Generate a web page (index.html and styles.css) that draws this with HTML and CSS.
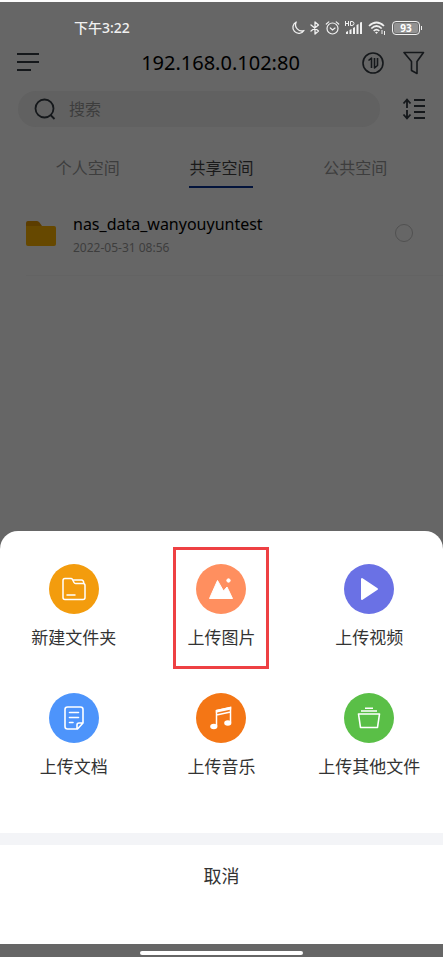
FILE: index.html
```html
<!DOCTYPE html>
<html lang="zh-CN">
<head>
<meta charset="utf-8">
<meta name="viewport" content="width=device-width, initial-scale=1">
<title>192.168.0.102:80</title>
<link rel="stylesheet" href="styles.css">
</head>
<body>
<div class="status">
  <span class="clock">下午3:22</span>
  <div class="status-icons">
    <svg width="14" height="14" viewBox="0 0 14 14" fill="none" stroke="currentColor" stroke-width="1.3" stroke-linejoin="round"><path d="M5.2 1A6 6 0 1 0 13 9.500A6.200 6.200 0 0 1 5.200 1z"/></svg>
    <svg width="10" height="14" viewBox="0 0 10 14" fill="none" stroke="currentColor" stroke-width="1.3" stroke-linejoin="round" stroke-linecap="round"><path d="M1 4l7.500 6L5 13V1l3.500 3L1 10"/></svg>
    <svg width="15" height="14" viewBox="0 0 14 14" fill="none" stroke="currentColor" stroke-width="1.200" stroke-linecap="round"><circle cx="7" cy="7.500" r="5.500"/><path d="M4.800 7L7 9l2.500-2M.8 3L3.300.9M13.200 3L10.700.9"/></svg>
    <svg width="18" height="14" viewBox="0 0 18 14" fill="currentColor"><path d="M.5 0v5M3.500 0v5M.5 2.500h3M5.500.5v4H7q2-.2 2-2T7 .5z" fill="none" stroke="currentColor"/><path d="M1 11l2-1v3H1zM4.500 9l2-1v5h-2zM8 7l2-1v7H8zM11.500 4l2-1v10h-2zM15 1.500l2-.5v12h-2z"/></svg>
    <svg width="18" height="14" viewBox="0 0 18 14" fill="none" stroke="currentColor" stroke-width="1.700"><path d="M1 5Q8.500-2 16 5M3.300 7.500q5.200-5 10.400 0M5.700 10q2.800-2.700 5.600 0"/><path d="M7 11.200q1.500-1 3 0L8.500 13z" fill="currentColor" stroke="none"/><path d="M14 9v4M16.500 10v4" stroke-width="1"/></svg>
    <span class="battery"><span class="battery-level">93</span></span>
  </div>
</div>
<header class="topbar">
  <button class="icon-button" aria-label="菜单"><svg width="24" height="20" viewBox="0 0 24 20" stroke="currentColor" stroke-width="2"><path d="M1 1h22M1 9h22M1 17h14"/></svg></button>
  <h1 class="title">192.168.0.102:80</h1>
  <div class="actions">
    <button class="icon-button" aria-label="传输"><svg width="22" height="22" viewBox="0 0 22 22" fill="none" stroke="currentColor" stroke-width="1.600"><circle cx="11" cy="11" r="10"/><path d="M6.500 8.500L9.500 6v10M12.500 6v10l3-2.500V6" stroke-linejoin="round"/></svg></button>
    <button class="icon-button" aria-label="筛选"><svg width="22" height="24" viewBox="0 0 22 24" fill="none" stroke="currentColor" stroke-width="1.600" stroke-linejoin="round"><path d="M1 1.500h19.500L14 10.500v12l-5.500-3v-9z"/></svg></button>
  </div>
</header>
<div class="search-row">
  <label class="search">
    <svg width="22" height="22" viewBox="0 0 22 22" fill="none" stroke="currentColor" stroke-width="1.800"><circle cx="10.500" cy="10.500" r="9"/><path d="M16.500 17l4 4"/></svg>
    <input class="search-input" type="search" placeholder="搜索" aria-label="搜索">
  </label>
  <button class="icon-button" aria-label="排序"><svg width="24" height="22" viewBox="0 0 24 22" fill="none" stroke="currentColor" stroke-width="1.800"><path d="M5 10V2M1.500 5.500L5 1.500l3.500 4M5 12v8M1.500 16.500l3.500 4 3.500-4M12 2h11M12 8h11M12 14h11M12 20h11"/></svg></button>
</div>
<nav class="tabs">
  <a class="tab" href="#personal">个人空间</a>
  <a class="tab tab-active" href="#shared" aria-current="page">共享空间</a>
  <a class="tab" href="#public">公共空间</a>
</nav>
<main class="files">
  <label class="file">
    <svg width="30" height="25" viewBox="0 0 30 25"><path d="M0 2q0-2 2-2h9q1.500 0 2.500 1.500L16 5v7H0z" fill="#5c3d00"/><path d="M0 5h28q2 0 2 2v16q0 2-2 2H2q-2 0-2-2z" fill="#664800"/></svg>
    <span class="file-text">
      <span class="file-name">nas_data_wanyouyuntest</span>
      <span class="file-date">2022-05-31 08:56</span>
    </span>
    <input class="file-check" type="radio" name="file">
  </label>
</main>
<section class="sheet" aria-label="上传">
  <div class="tiles">
    <button class="tile"><span class="badge amber"><svg width="24" height="24" viewBox="0 0 24 24" fill="none" stroke="currentColor" stroke-width="1.500" stroke-linejoin="round" stroke-linecap="round"><path d="M3 1.500h6q1 0 1.500 1l1.500 3q.5 1 1.500 1h7.500q2 0 2 2v12q0 2-2 2H3q-2 0-2-2v-17q0-2 2-2z"/><path d="M11.500 3h8q2 0 2.300 3"/><path d="M5 18h8"/></svg></span>新建文件夹</button>
    <button class="tile tile-marked"><span class="badge coral"><svg width="26" height="22" viewBox="0 0 26 22" fill="currentColor" stroke="currentColor" stroke-linejoin="round"><path d="M1.500 20.500L9.500 2.500l6 10.500 3.500-4 5.500 11.500z"/><circle cx="20.500" cy="2.500" r="1.700"/></svg></span>上传图片</button>
    <button class="tile"><span class="badge indigo"><svg width="22" height="24" viewBox="0 0 22 24" fill="currentColor" stroke="currentColor" stroke-width="2" stroke-linejoin="round"><path d="M4 2v20l15-10z"/></svg></span>上传视频</button>
    <button class="tile"><span class="badge blue"><svg width="20" height="24" viewBox="0 0 20 24" fill="none" stroke="currentColor" stroke-width="1.600" stroke-linejoin="round" stroke-linecap="round"><path d="M3.500 1h13q2.500 0 2.500 2.500V17l-5.500 6h-10Q1 23 1 20.500v-17Q1 1 3.500 1zM13 22.500V19q0-2 2-2h3.800"/><path d="M5.500 6.500h9M5.500 11.500h9M5.500 16.500H9"/></svg></span>上传文档</button>
    <button class="tile"><span class="badge orange"><svg width="24" height="24" viewBox="0 0 24 24" fill="none" stroke="currentColor" stroke-width="1.500"><path d="M7.500 20V4.500L21.500 1.500v15M7.500 9l14-3"/><path d="M6.800 4l15.400-3.300v2.800L6.800 6.800z" fill="currentColor" stroke="none"/><ellipse cx="4.800" cy="20.500" rx="3.600" ry="2.700" fill="currentColor" stroke="none"/><ellipse cx="18.800" cy="17" rx="3.600" ry="2.700" fill="currentColor" stroke="none"/></svg></span>上传音乐</button>
    <button class="tile"><span class="badge green"><svg width="24" height="22" viewBox="0 0 24 22" fill="none" stroke="currentColor" stroke-width="1.600" stroke-linejoin="round"><path d="M1.500 7h21L20.500 20.500h-17zM4 4h16M8 1.200h8"/></svg></span>上传其他文件</button>
  </div>
  <div class="cancel-area"><button class="cancel">取消</button></div>
</section>
<footer class="homebar"><span class="pill"></span></footer>
</body>
</html>
```
FILE: styles.css
```css
* { box-sizing: border-box; }

body {
  margin: 0;
  min-height: 100vh;
  display: flex;
  flex-direction: column;
  border-top: 2px solid #fcfcfc;
  background: #666;
  color: #000;
  font-family: "Noto Sans", "Noto Sans CJK SC", sans-serif;
}

button {
  padding: 0;
  border: 0;
  background: none;
  color: inherit;
  font: inherit;
}

svg { display: block; flex: none; }

.status {
  display: flex;
  justify-content: space-between;
  align-items: center;
  height: 36px;
  padding: 16px 20px 0 74px;
  color: #f0f0f0;
}

.clock {
  font-size: 14px;
  line-height: 20px;
  font-weight: 500;
}

.status-icons { display: flex; align-items: center; gap: 5px; }

.battery {
  position: relative;
  width: 28px;
  height: 14px;
  margin: 0 3px 0 1px;
  padding: 1px;
  border: 1px solid #f0f0f0;
  border-radius: 4px;
}

.battery::after {
  content: "";
  position: absolute;
  top: 4px;
  right: -3px;
  width: 1px;
  height: 4px;
  background: #f0f0f0;
}

.battery-level {
  display: block;
  border-radius: 2px;
  background: #929292;
  color: #fff;
  font-size: 10px;
  line-height: 10px;
  font-weight: 700;
  text-align: center;
}

.topbar {
  display: grid;
  grid-template-columns: 1fr auto 1fr;
  align-items: center;
  height: 50px;
  padding: 0 18px 0 16px;
}

.icon-button { color: #15181b; justify-self: start; }

.title {
  margin: 0;
  font-size: 20px;
  line-height: 28px;
  font-weight: 400;
}

.actions { display: flex; justify-self: end; align-items: center; gap: 19px; }

.search-row {
  display: flex;
  align-items: center;
  gap: 22px;
  padding: 3px 17px 0 18px;
}

.search {
  flex: 1;
  min-width: 0;
  display: flex;
  align-items: center;
  gap: 13px;
  height: 36px;
  padding: 0 16px;
  border-radius: 18px;
  background: #616161;
  color: #15181b;
}

.search-input {
  flex: 1;
  min-width: 0;
  padding: 0;
  border: 0;
  outline: 0;
  background: none;
  color: #111;
  font: inherit;
  font-size: 16px;
}

.search-input::placeholder { color: #3d3d3d; opacity: 1; }

.tabs {
  display: flex;
  justify-content: space-around;
  padding: 28px 21px 0;
}

.tab {
  padding-bottom: 5px;
  border-bottom: 2px solid transparent;
  color: #3d3d3d;
  font-size: 16px;
  line-height: 26px;
  text-decoration: none;
}

.tab-active { border-color: #03143c; color: #1a1a1a; }

.files { flex: 1; padding-top: 21px; }

.file {
  display: flex;
  align-items: center;
  gap: 17px;
  height: 67px;
  margin-left: 26px;
  padding: 0 30px 18px 0;
  border-bottom: 1px solid #636363;
}

.file-text {
  flex: 1;
  min-width: 0;
  display: flex;
  flex-direction: column;
  padding-top: 4px;
}

.file-name { font-size: 16px; line-height: 26px; }
.file-date { color: #3d3d3d; font-size: 12px; line-height: 22px; }

.file-check {
  appearance: none;
  width: 18px;
  height: 18px;
  margin: 0;
  border: 1px solid #515151;
  border-radius: 50%;
}

.sheet {
  padding-top: 16px;
  border-radius: 18px 18px 0 0;
  background: #fff;
  color: #333;
}

.tiles {
  display: grid;
  grid-template-columns: repeat(3, 1fr);
  justify-items: center;
  row-gap: 7px;
  padding-bottom: 35px;
}

.tile {
  display: flex;
  flex-direction: column;
  align-items: center;
  gap: 11px;
  min-width: 96px;
  height: 122px;
  padding-top: 14px;
  border: 3px solid transparent;
  font-size: 17px;
  line-height: 26px;
  white-space: nowrap;
}

.tile-marked { border-color: #ee4043; }

.badge {
  display: grid;
  place-items: center;
  width: 50px;
  height: 50px;
  border-radius: 50%;
  color: #fff;
}

.amber { background: #f39c0d; }
.coral { background: #ff8f5f; }
.indigo { background: #6a71e5; }
.blue { background: #4d94fb; }
.orange { background: #f47615; }
.green { background: #5abf47; }

.cancel-area {
  padding-bottom: 39px;
  border-top: 12px solid #f3f4f7;
}

.cancel {
  display: block;
  width: 100%;
  height: 60px;
  font-size: 18px;
}

.homebar {
  display: flex;
  justify-content: center;
  height: 13px;
  padding-top: 7px;
}

.pill {
  width: 37%;
  height: 4px;
  border-radius: 2px;
  background: #fff;
}
```
